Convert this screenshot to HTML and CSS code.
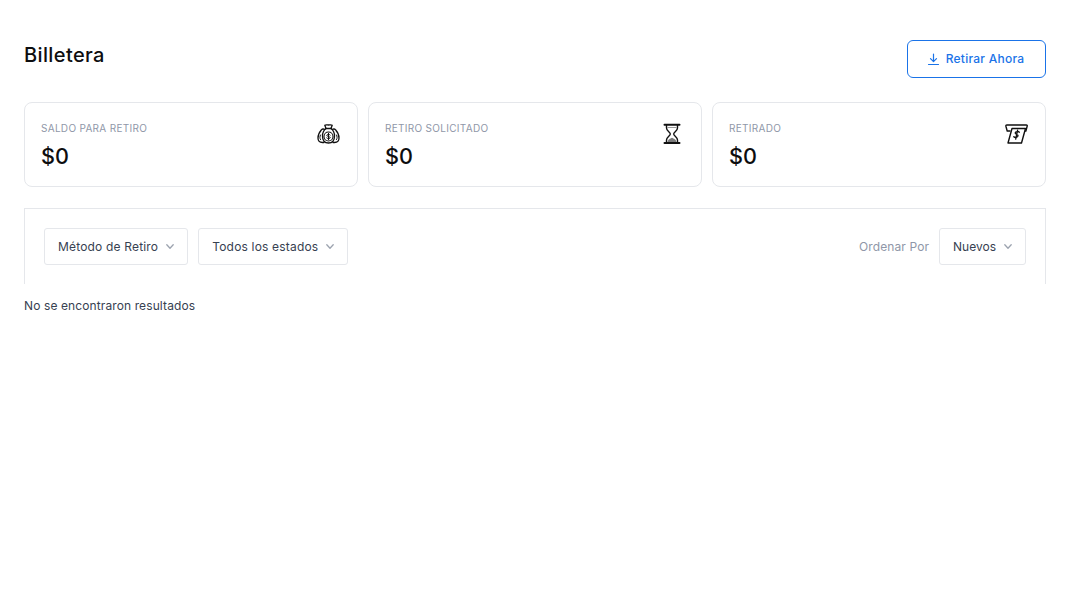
FILE: index.html
```html
<!DOCTYPE html>
<html lang="es">
<head>
<meta charset="utf-8">
<title>Billetera</title>
<link rel="stylesheet" href="styles.css">
</head>
<body>
<main class="page">
  <header class="head">
    <h1 class="title">Billetera</h1>
    <button class="cta">
      <svg class="cta-icon" viewBox="0 0 13 13" fill="none" stroke="currentColor" stroke-width="1.2" stroke-linecap="round" stroke-linejoin="round"><path d="M6.500 1v7.500M3.500 5.600l3 3 3-3M1.500 11.500h10"/></svg>
      Retirar Ahora
    </button>
  </header>
  <section class="cards">
    <article class="card">
      <div>
        <div class="label">SALDO PARA RETIRO</div>
        <div class="value">$0</div>
      </div>
      <svg class="icon" viewBox="0 0 24 24" fill="none" stroke="#111" stroke-width="1.300" stroke-linecap="round" stroke-linejoin="round">
        <path d="M9 6.500 7.800 3.300c1.200-1 2.400-.3 3.700-.3s2.500-.7 3.700.3L14 6.500"/>
        <path d="M9 6.500h5"/>
        <path d="M9 6.500C7 8 5.500 10.800 5.500 14c0 4.500 2.500 7 6 7s6-2.500 6-7c0-3.200-1.500-6-3.500-7.500"/>
        <path d="M7.800 7.500C6.500 6.700 5 6.800 4.300 8 2 10.500 1 13.500 1 16c0 3 2 4.500 4.500 4.500H7"/>
        <path d="M15.200 7.500c1.300-.8 2.800-.7 3.500.5 2.300 2.500 3.300 5.500 3.300 8 0 3-2 4.500-4.500 4.500H16"/>
        <path d="M3.500 13c-.8 1.500-.9 3.300 0 4.600M19.500 13c.8 1.500.9 3.300 0 4.600" stroke-width="1"/>
        <circle cx="11.500" cy="14.500" r="4.500" stroke-width="1.100"/>
        <path d="M13.200 13c-.4-.8-3.300-1-3.400.4-.1 1.400 3.500.8 3.400 2.300-.1 1.300-2.900 1.100-3.500.3M11.500 11.400v6.200" stroke-width="1"/>
      </svg>
    </article>
    <article class="card">
      <div>
        <div class="label">RETIRO SOLICITADO</div>
        <div class="value">$0</div>
      </div>
      <svg class="icon" viewBox="0 0 24 24" fill="none" stroke="#111" stroke-width="1.400" stroke-linecap="round" stroke-linejoin="round">
        <path d="M3.500 2.800h15M3.500 21h15" stroke-width="2"/>
        <path d="M5.500 3.500V6c0 3 3.800 4.200 3.800 6s-3.800 3-3.800 6v2.500M16.500 3.500V6c0 3-3.800 4.200-3.800 6s3.800 3 3.800 6v2.500"/>
        <path d="M6.500 5.300h9v.7h-9zM6.500 20c0-2.300 3-3.400 4.500-4.200 1.500.8 4.500 1.900 4.500 4.200z" fill="#7a7a7a" stroke="none"/>
      </svg>
    </article>
    <article class="card">
      <div>
        <div class="label">RETIRADO</div>
        <div class="value">$0</div>
      </div>
      <svg class="icon" viewBox="0 0 24 24" fill="none" stroke="#111" stroke-width="1.400" stroke-linecap="round" stroke-linejoin="round">
        <path d="M5 9H2.200L.9 4.200c-.1-.8.200-1.200 1-1.200h19.300c.8 0 1.200.4 1 1.200L20.900 9H18.500"/>
        <path d="M7 6.500h13.500L16.500 21H3z" fill="#fff"/>
        <path d="M14.300 10.200c-.7-.9-3.800-1.100-4.100.7-.3 1.900 3.100 1.200 2.800 3.100-.3 1.800-3.300 1.600-4.200.7M12.600 8.200l-1.900 9" stroke-width="1.300"/>
      </svg>
    </article>
  </section>
  <section class="filters">
    <div class="filter-group">
      <button class="select">Método de Retiro<svg class="chev" viewBox="0 0 8 5" fill="none" stroke="currentColor" stroke-width="1.300" stroke-linecap="round" stroke-linejoin="round"><path d="M.8.8 4 4.200 7.200.8"/></svg></button>
      <button class="select">Todos los estados<svg class="chev" viewBox="0 0 8 5" fill="none" stroke="currentColor" stroke-width="1.300" stroke-linecap="round" stroke-linejoin="round"><path d="M.8.8 4 4.200 7.200.8"/></svg></button>
    </div>
    <div class="filter-group sort">
      <span class="sort-label">Ordenar Por</span>
      <button class="select select-sort">Nuevos<svg class="chev" viewBox="0 0 8 5" fill="none" stroke="currentColor" stroke-width="1.300" stroke-linecap="round" stroke-linejoin="round"><path d="M.8.8 4 4.200 7.200.8"/></svg></button>
    </div>
  </section>
  <p class="empty">No se encontraron resultados</p>
</main>
</body>
</html>
```
FILE: styles.css
```css
* { box-sizing: border-box; }
html, body { margin: 0; padding: 0; background: #fff; }
body { font-family: Inter, "Liberation Sans", sans-serif; color: #374151; }
.page { padding: 40px 26px 0 24px; }
.head { display: flex; justify-content: space-between; align-items: flex-start; height: 38px; margin-bottom: 24px; }
.title { margin: 3px 0 0; font-size: 20px; line-height: 24px; font-weight: 500; color: #0d0d0f; letter-spacing: .38px; }
.cta {
  display: flex; align-items: center; justify-content: center; gap: 6px;
  width: 139px; height: 38px; padding: 0 2px 0 0;
  background: #fff; border: 1px solid #1a73e8; border-radius: 6px;
  color: #1a73e8; font: 500 12px/16px Inter, "Liberation Sans", sans-serif; letter-spacing: .25px;
}
.cta-icon { width: 13px; height: 13px; }
.cards { display: grid; grid-template-columns: repeat(3, 1fr); gap: 10px; margin-bottom: 21px; }
.card {
  display: flex; justify-content: space-between; align-items: flex-start;
  height: 85px; padding: 19px 16px 0 16px;
  background: #fff; border: 1px solid #e5e7eb; border-radius: 8px;
}
.label { font-size: 10px; line-height: 12px; font-weight: 400; color: #8f97a8; letter-spacing: .3px; }
.value { margin-top: 10px; font-size: 21.600px; line-height: 24px; font-weight: 500; color: #0d0d0f; }
.icon { width: 24px; height: 24px; }
.filters {
  display: flex; justify-content: space-between; align-items: flex-start;
  height: 76px; padding: 19px 19px 0;
  border: 1px solid #e5e7eb; border-bottom: 0;
}
.filter-group { display: flex; gap: 10px; align-items: center; }
.select {
  display: flex; align-items: center; gap: 8px;
  height: 37px; padding: 0 13px;
  background: #fff; border: 1px solid #e5e7eb; border-radius: 3px;
  color: #374151; font: 400 12px/16px Inter, "Liberation Sans", sans-serif; letter-spacing: .18px;
}
.select-sort { letter-spacing: 0; }
.chev { width: 8px; height: 5px; color: #9ca3af; }
.sort-label { font-size: 12px; color: #8f97a8; letter-spacing: .1px; }
.empty { margin: 14px 0 0; font-size: 12px; line-height: 16px; color: #374151; letter-spacing: .11px; }
```
